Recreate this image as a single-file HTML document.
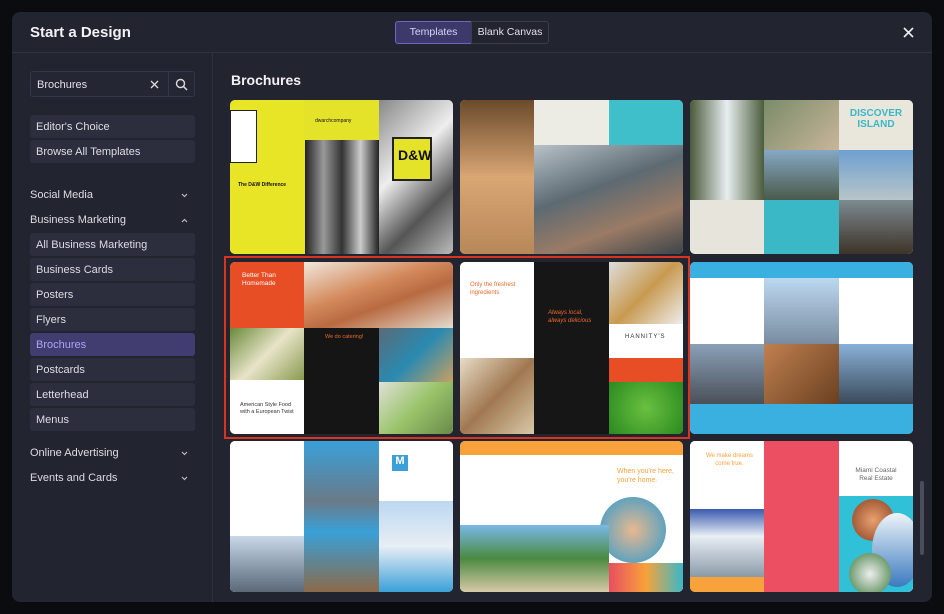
<!DOCTYPE html>
<html><head><meta charset="utf-8"><style>
*{margin:0;padding:0;box-sizing:border-box}
body{width:944px;height:614px;background:#0b0c10;font-family:"Liberation Sans",sans-serif;position:relative;overflow:hidden;color:#e6e7ee}
.a{position:absolute}
.modal{left:12px;top:12px;width:920px;height:590px;background:#222430;border-radius:8px}
.btn{position:absolute;left:30px;width:165px;height:23px;background:#2c2e3d;border-radius:3px;font-size:11px;line-height:24px;padding-left:6px;color:#dcdde5}
.cat{position:absolute;left:30px;width:165px;font-size:11px;color:#dcdde5}
.cat svg{position:absolute;right:7px;top:4px}
.card{position:absolute;border-radius:5px;overflow:hidden;background:#fff}
.p{position:absolute}
.t{position:absolute;font-size:5px;color:#fff;line-height:1.3}
</style></head><body>
<div class="a modal"></div>
<div class="a" style="left:30px;top:24px;font-size:15px;font-weight:bold;color:#f2f2f5">Start a Design</div>
<div class="a" style="left:395px;top:21px;width:77px;height:23px;background:#3d3a6b;border:1px solid #6b66c4;border-radius:3px 0 0 3px;font-size:10.5px;line-height:21px;text-align:center;color:#d6d3ff">Templates</div>
<div class="a" style="left:471px;top:21px;width:78px;height:23px;border:1px solid #3a3d4a;border-radius:0 3px 3px 0;font-size:10.5px;line-height:21px;text-align:center;color:#e0e0e8">Blank Canvas</div>
<svg class="a" style="left:903px;top:27px" width="11" height="11"><path d="M1 1L10 10M10 1L1 10" stroke="#eee" stroke-width="1.6"/></svg>
<div class="a" style="left:12px;top:52px;width:920px;height:1px;background:#30323f"></div>
<div class="a" style="left:212px;top:53px;width:1px;height:549px;background:#30323f"></div>
<div class="a" style="left:30px;top:71px;width:165px;height:26px;border:1px solid #343747;border-radius:3px;background:#242633"></div>
<div class="a" style="left:168px;top:72px;width:1px;height:24px;background:#343747"></div>
<div class="a" style="left:37px;top:79px;font-size:11px;color:#e0e0e8">Brochures</div>
<svg class="a" style="left:150px;top:80px" width="9" height="9"><path d="M1 1L8 8M8 1L1 8" stroke="#ddd" stroke-width="1.3"/></svg>
<svg class="a" style="left:175px;top:78px" width="13" height="13"><circle cx="5.5" cy="5.5" r="4" stroke="#ddd" stroke-width="1.4" fill="none"/><path d="M8.5 8.5L12 12" stroke="#ddd" stroke-width="1.5"/></svg>
<div class="btn" style="top:115px">Editor's Choice</div>
<div class="btn" style="top:140px">Browse All Templates</div>
<div class="cat" style="top:189px">Social Media<svg width="7" height="5"><path d="M1 1L3.5 3.5L6 1" stroke="#bbb" stroke-width="1.2" fill="none"/></svg></div>
<div class="cat" style="top:214px">Business Marketing<svg width="7" height="5"><path d="M1 4L3.5 1.5L6 4" stroke="#bbb" stroke-width="1.2" fill="none"/></svg></div>
<div class="btn" style="top:233px">All Business Marketing</div>
<div class="btn" style="top:258px">Business Cards</div>
<div class="btn" style="top:283px">Posters</div>
<div class="btn" style="top:308px">Flyers</div>
<div class="btn" style="top:333px;background:#413d70;color:#aba5f2">Brochures</div>
<div class="btn" style="top:358px">Postcards</div>
<div class="btn" style="top:383px">Letterhead</div>
<div class="btn" style="top:408px">Menus</div>
<div class="cat" style="top:447px">Online Advertising<svg width="7" height="5"><path d="M1 1L3.5 3.5L6 1" stroke="#bbb" stroke-width="1.2" fill="none"/></svg></div>
<div class="cat" style="top:472px">Events and Cards<svg width="7" height="5"><path d="M1 1L3.5 3.5L6 1" stroke="#bbb" stroke-width="1.2" fill="none"/></svg></div>
<div class="a" style="left:231px;top:72px;font-size:14px;font-weight:bold;color:#f2f2f5">Brochures</div>
<div class="a" style="left:920px;top:481px;width:4px;height:74px;background:#4a4d5c;border-radius:2px"></div>
<div class="a" style="left:224px;top:256px;width:466px;height:183px;border:2px solid #d8341f"></div>

<div class="card" style="left:230px;top:100px;width:223px;height:154px;background:#e5e22a">
<div class="p" style="left:149px;top:0;width:74px;height:154px;background:linear-gradient(135deg,#888,#eee 40%,#555 70%,#bbb)"></div>
<div class="p" style="left:0;top:0;width:74px;height:154px;background:#e8e526"></div>
<div class="p" style="left:0;top:10px;width:27px;height:53px;border:1px solid #222;background:#fff"></div>
<div class="p" style="left:75px;top:40px;width:74px;height:114px;background:linear-gradient(90deg,#222,#999,#333,#ccc,#222)"></div>
<div class="p" style="left:162px;top:37px;width:40px;height:44px;border:2px solid #222;background:#e5e22a"><div style="font:bold 14px 'Liberation Sans';color:#111;padding:8px 0 0 4px">D&amp;W</div></div>
<div class="t" style="left:8px;top:82px;color:#111;font-weight:bold">The D&amp;W Difference</div>
<div class="t" style="left:85px;top:18px;color:#111">dwarchcompany</div>
</div>
<div class="card" style="left:460px;top:100px;width:223px;height:154px">
<div class="p" style="left:0;top:0;width:74px;height:154px;background:linear-gradient(180deg,#6b4a2c,#d9a674 50%,#b88859)"></div>
<div class="p" style="left:74px;top:0;width:75px;height:45px;background:#ecebe4"></div>
<div class="p" style="left:149px;top:0;width:74px;height:45px;background:#3ebfca"></div>
<div class="p" style="left:74px;top:45px;width:149px;height:109px;background:linear-gradient(160deg,#b7c1c8,#5d6a72 40%,#9a7b66 70%,#3d4448)"></div>
</div>
<div class="card" style="left:690px;top:100px;width:223px;height:154px">
<div class="p" style="left:0;top:0;width:74px;height:100px;background:linear-gradient(90deg,#4a5a3a,#e8eef0 50%,#4b5d3c)"></div>
<div class="p" style="left:0;top:100px;width:74px;height:54px;background:#e7e4dc"></div>
<div class="p" style="left:74px;top:0;width:75px;height:50px;background:linear-gradient(135deg,#7a8c6a,#c9b59a)"></div>
<div class="p" style="left:74px;top:50px;width:75px;height:50px;background:linear-gradient(180deg,#86a8c4,#4b5a4a)"></div>
<div class="p" style="left:74px;top:100px;width:75px;height:54px;background:#3ab8c6"></div>
<div class="p" style="left:149px;top:0;width:74px;height:50px;background:#e9e6dc"><div style="font:bold 10px 'Liberation Sans';color:#3ab8c6;text-align:center;padding-top:8px">DISCOVER ISLAND</div></div>
<div class="p" style="left:149px;top:50px;width:74px;height:50px;background:linear-gradient(180deg,#6ea0d0,#b8c4c8)"></div>
<div class="p" style="left:149px;top:100px;width:74px;height:54px;background:linear-gradient(180deg,#7c8a90,#3e3328)"></div>
</div>

<div class="card" style="left:230px;top:262px;width:223px;height:172px">
<div class="p" style="left:0;top:0;width:74px;height:66px;background:#e84e26"></div>
<div class="t" style="left:12px;top:10px;font-size:6.5px">Better Than<br>Homemade</div>
<div class="p" style="left:74px;top:0;width:149px;height:66px;background:linear-gradient(160deg,#f0e8de,#d48a5c 40%,#b86a40 60%,#e4dcd0)"></div>
<div class="p" style="left:0;top:66px;width:74px;height:52px;background:linear-gradient(135deg,#6a8a3a,#e8e4c8 50%,#8a9a50)"></div>
<div class="p" style="left:0;top:118px;width:74px;height:54px;background:#fff"></div>
<div class="t" style="left:10px;top:140px;color:#333;font-size:5.5px">American Style Food<br>with a European Twist</div>
<div class="p" style="left:74px;top:66px;width:75px;height:106px;background:#151515"></div>
<div class="t" style="left:95px;top:72px;color:#e86a2c;font-size:5.5px">We do catering!</div>
<div class="p" style="left:149px;top:66px;width:74px;height:54px;background:linear-gradient(135deg,#5a6a78,#2a8ab0 50%,#c8a060)"></div>
<div class="p" style="left:149px;top:120px;width:74px;height:52px;background:linear-gradient(135deg,#e0e0d8,#9ac46a 50%,#6a8a4a)"></div>
</div>
<div class="card" style="left:460px;top:262px;width:223px;height:172px">
<div class="p" style="left:0;top:0;width:74px;height:96px;background:#fff"></div>
<div class="t" style="left:10px;top:20px;color:#e86a2c;font-size:6px">Only the freshest<br>ingredients</div>
<div class="p" style="left:0;top:96px;width:74px;height:76px;background:linear-gradient(135deg,#e8dcc8,#a07850 50%,#d8c8a8)"></div>
<div class="p" style="left:74px;top:0;width:75px;height:172px;background:#161616"></div>
<div class="t" style="left:88px;top:48px;color:#e86a2c;font-size:6px;font-style:italic">Always local,<br>always delicious</div>
<div class="p" style="left:149px;top:0;width:74px;height:62px;background:linear-gradient(135deg,#ddd,#c89a50 50%,#eee)"></div>
<div class="p" style="left:149px;top:62px;width:74px;height:34px;background:#fff"></div>
<div class="t" style="left:165px;top:72px;color:#333;font-size:6px;letter-spacing:1px">HANNITY'S</div>
<div class="p" style="left:149px;top:96px;width:74px;height:24px;background:#e84e26"></div>
<div class="p" style="left:149px;top:120px;width:74px;height:52px;background:radial-gradient(circle,#6ac040,#2a8a20)"></div>
</div>
<div class="card" style="left:690px;top:262px;width:223px;height:172px">
<div class="p" style="left:0;top:0;width:223px;height:16px;background:#3ab0e0"></div>
<div class="p" style="left:0;top:16px;width:74px;height:66px;background:#fff"></div>
<div class="p" style="left:74px;top:16px;width:75px;height:66px;background:linear-gradient(180deg,#bcd8f0,#7a8ca0)"></div>
<div class="p" style="left:149px;top:16px;width:74px;height:66px;background:#fff"></div>
<div class="p" style="left:0;top:82px;width:74px;height:60px;background:linear-gradient(180deg,#8aa0b8,#4a5058)"></div>
<div class="p" style="left:74px;top:82px;width:75px;height:60px;background:linear-gradient(135deg,#c08050,#6a4020)"></div>
<div class="p" style="left:149px;top:82px;width:74px;height:60px;background:linear-gradient(180deg,#8ab0d8,#3a4a5a)"></div>
<div class="p" style="left:0;top:142px;width:223px;height:30px;background:#3ab0e0"></div>
</div>

<div class="card" style="left:230px;top:441px;width:223px;height:151px">
<div class="p" style="left:0;top:0;width:74px;height:151px;background:#fff"></div>
<div class="p" style="left:0;top:95px;width:74px;height:56px;background:linear-gradient(180deg,#c8d8e8,#5a6878)"></div>
<div class="p" style="left:74px;top:0;width:75px;height:151px;background:linear-gradient(180deg,#3aa0d8,#6a7a88 40%,#3aa0d8 60%,#8a6a4a)"></div>
<div class="p" style="left:149px;top:0;width:74px;height:60px;background:#fff"></div>
<div class="p" style="left:162px;top:14px;width:16px;height:16px;background:#3aa0d8;font:bold 11px 'Liberation Sans';color:#fff;text-align:center">M</div>
<div class="p" style="left:149px;top:60px;width:74px;height:91px;background:linear-gradient(180deg,#bcd8f0,#e8eef4 50%,#3aa0d8)"></div>
</div>
<div class="card" style="left:460px;top:441px;width:223px;height:151px">
<div class="p" style="left:0;top:0;width:223px;height:14px;background:#f7a23a"></div>
<div class="p" style="left:0;top:14px;width:149px;height:70px;background:#fff"></div>
<div class="p" style="left:149px;top:14px;width:74px;height:137px;background:#fff"></div>
<div class="t" style="left:157px;top:26px;color:#f7a23a;font-size:7px">When you're here,<br>you're home.</div>
<div class="p" style="left:140px;top:56px;width:66px;height:66px;border-radius:50%;background:radial-gradient(circle,#e8b890,#2a9ad0)"></div>
<div class="p" style="left:0;top:84px;width:149px;height:67px;background:linear-gradient(180deg,#7ab8e8,#4a8a40 50%,#d8c8a8)"></div>
<div class="p" style="left:149px;top:122px;width:74px;height:29px;background:linear-gradient(90deg,#e84e60,#f7a23a,#3ab8c8)"></div>
</div>
<div class="card" style="left:690px;top:441px;width:223px;height:151px">
<div class="p" style="left:0;top:0;width:74px;height:68px;background:#fff"></div>
<div class="t" style="left:16px;top:12px;color:#f7a23a;font-size:6px;text-align:center">We make dreams<br>come true.</div>
<div class="p" style="left:0;top:68px;width:74px;height:68px;background:linear-gradient(180deg,#3a5ab0,#e8eef4 40%,#8a9aa8)"></div>
<div class="p" style="left:0;top:136px;width:74px;height:15px;background:#f7a23a"></div>
<div class="p" style="left:74px;top:0;width:75px;height:151px;background:#ec4f62"></div>
<div class="p" style="left:149px;top:0;width:74px;height:151px;background:#fff"></div>
<div class="t" style="left:152px;top:26px;color:#666;font-size:6.5px;text-align:center;width:68px">Miami Coastal<br>Real Estate</div>
<div class="p" style="left:149px;top:55px;width:74px;height:96px;background:#30c0d8"></div>
<div class="p" style="left:162px;top:58px;width:42px;height:42px;border-radius:50%;background:radial-gradient(circle,#e8a070,#8a4020)"></div>
<div class="p" style="left:182px;top:72px;width:50px;height:74px;border-radius:50%;background:linear-gradient(180deg,#eef4f8,#3a7ac0)"></div>
<div class="p" style="left:159px;top:112px;width:42px;height:42px;border-radius:50%;background:radial-gradient(circle,#eee,#3a7a3a)"></div>
</div>
</body></html>
